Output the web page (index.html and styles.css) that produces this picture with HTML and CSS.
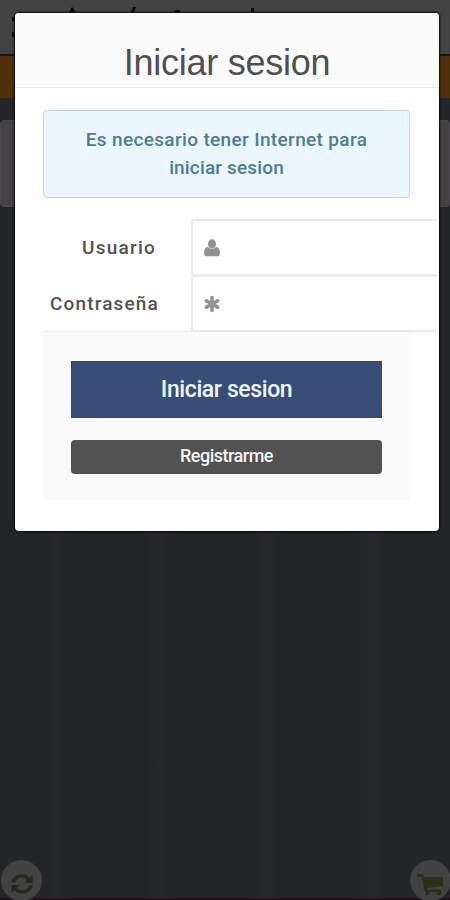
FILE: index.html
```html
<!DOCTYPE html>
<html lang="es">
<head>
<meta charset="utf-8">
<title>Iniciar sesion</title>
<link rel="stylesheet" href="styles.css">
</head>
<body>
<div class="page">
  <div class="topbar">
    <svg width="450" height="56" viewBox="0 0 450 56" fill="#0b0b0b"><path d="M69 12l3-5 4 5zM131 12l2-5h3l-2 5zM174 12q4-5 7 0zM251 8h3v4h-3zM12 17h2v4h-2zM12 32h2v5h-2z"/></svg>
  </div>
  <div class="stripe"></div>
  <div class="panel"></div>
</div>
<main class="modal">
  <header class="modal-header"><h1>Iniciar sesion</h1></header>
  <div class="modal-body">
    <div class="alert"><span class="line-one">Es necesario tener Internet para</span><br><span class="line-two">iniciar sesion</span></div>
    <form class="form">
      <div class="row">
        <label class="user-label">Usuario</label>
        <div class="field"><svg width="16" height="18" viewBox="0 0 16 18" fill="#929292"><ellipse cx="8" cy="5" rx="4" ry="4.7"/><path d="M3.8 8.1Q8 12 12.2 8.1Q16 8.7 16 14.2Q16 17.2 13.5 17.2H2.5Q0 17.2 0 14.2Q0 8.7 3.8 8.1z"/></svg></div>
      </div>
      <div class="row">
        <label class="pass-label">Contraseña</label>
        <div class="field"><svg width="16" height="18" viewBox="0 0 16 18" stroke="#929292" stroke-width="3.6" stroke-linecap="round"><path d="M8 2.5v13M2.3 5.8l11.4 6.4M2.3 12.2l11.4-6.4"/></svg></div>
      </div>
      <div class="actions">
        <button type="button" class="login"><span>Iniciar sesion</span></button>
        <button type="button" class="register"><span>Registrarme</span></button>
      </div>
    </form>
  </div>
</main>
<div class="fab fab-left"><svg width="24" height="24" viewBox="0 0 24 24" fill="none" stroke="#25281b" stroke-width="3.6"><path d="M3 10.5Q5 4 12 4q4.500 0 7 4M21 13.500Q19 20 12 20q-4.500 0-7-4"/><path d="M22.500 3v8h-8zM1.500 21v-8h8z" fill="#25281b" stroke="none"/></svg></div>
<div class="fab fab-right"><svg width="28" height="24" viewBox="0 0 28 24" fill="#2b3117"><path d="M0 2h6l1 3h19v9l-16 2 .5 1.500H24V20H8L4.500 5H0z"/><circle cx="10.500" cy="21" r="2.300"/><circle cx="22" cy="21" r="2.300"/></svg></div>
</body>
</html>
```
FILE: styles.css
```css
* { box-sizing: border-box; }
html, body { margin: 0; height: 100%; overflow: hidden; }
body {
  position: relative;
  background: #242529;
  font-family: "Liberation Sans", Arial, sans-serif;
}
.page {
  height: 900px;
  border-bottom: 2px solid #1b151b;
  background: linear-gradient(90deg, transparent 45px, #27282c 55px, transparent 68px, transparent 145px, #27282c 160px, transparent 174px, transparent 255px, #27282c 266px, transparent 278px, transparent 358px, #27282c 373px, transparent 386px);
}
.topbar { height: 56px; background: #434343; border-bottom: 2px solid #161616; }
.topbar svg { display: block; }
.stripe { height: 42px; background: #502f0a; }
.panel { height: 87px; margin-top: 22px; background: #454043; border: 1px solid #4b474a; border-radius: 4px; }
.modal {
  position: absolute;
  left: 15px;
  top: 13px;
  width: 424px;
  height: 518px;
  overflow: hidden;
  background: #fefefe;
  border-radius: 4px;
  box-shadow: 0 0 2px 1px #080808;
}
.modal-header { height: 75px; padding-top: 28px; background: #fafafa; border-bottom: 1px solid #e8e8e8; }
h1 { margin: 0; font-size: 36px; line-height: 43px; letter-spacing: -.25px; font-weight: 400; text-align: center; color: #505050; }
.modal-body { padding: 22px 0 0 28px; }
.alert {
  width: 367px;
  height: 88px;
  padding-top: 15px;
  background: #ebf6fe;
  border: 1px solid #bfdbe3;
  border-radius: 4px;
  font: 500 19px/28px Roboto, sans-serif;
  text-align: center;
  color: #4c7d93;
}
.line-one { letter-spacing: .35px; }
.line-two { letter-spacing: .15px; }
.form { margin-top: 21px; }
.row { display: flex; height: 56px; }
label { width: 148px; padding-top: 15px; font: 500 19px/28px Roboto, sans-serif; color: #525252; white-space: nowrap; }
.user-label { padding-left: 39px; letter-spacing: 1.250px; }
.pass-label { padding-left: 7px; letter-spacing: 1.150px; }
.field { width: 246px; height: 57px; padding: 18px 0 0 11px; border: 2px solid #ebebeb; border-right: 0; border-radius: 3px 0 0 3px; }
.field svg { display: block; }
.actions { width: 367px; height: 169px; padding: 29px 28px 0; background: #fafafa; border-top: 1px solid #ebebeb; }
button { display: block; width: 311px; border: 0; padding: 0; color: #fff; text-align: center; }
.login { height: 57px; background: #394e77; border: 1px solid #304879; font: 500 23px/55px Roboto, sans-serif; letter-spacing: -.4px; color: #edf6ff; }
.register { height: 34px; margin-top: 22px; background: #525252; border-radius: 4px; font: 500 18px/30px Roboto, sans-serif; letter-spacing: -.5px; padding-bottom: 3px; color: #f4f4f4; }
.fab { position: absolute; top: 860px; width: 41px; height: 41px; border-radius: 50%; background: #414241; display: flex; align-items: center; justify-content: center; padding-top: 7px; }
.fab-left { left: 1px; }
.fab-right { left: 410px; }
```
